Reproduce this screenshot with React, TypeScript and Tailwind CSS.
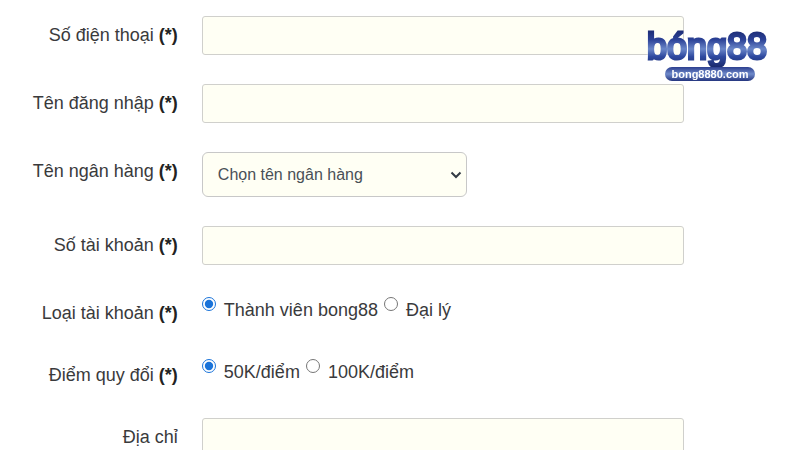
import React from 'react'

const rowClass = 'grid grid-cols-[26%_1fr] gap-x-6'
const labelClass = 'text-right text-lg leading-[39px] text-[#3a3a3c]'
const inputClass = 'block w-full h-[39px] rounded-[3px] border border-[#d0d0cc] bg-[#fffff4] px-4 text-base text-[#495057]'

const Required = () => <b className="text-[#222]">(*)</b>

const TextRow = ({ id, label, required = true }: { id: string; label: string; required?: boolean }) => (
    <div className={rowClass}>
        <label htmlFor={id} className={labelClass}>
            {label} {required && <Required />}
        </label>
        <input id={id} type="text" className={inputClass} />
    </div>
)

const RadioRow = ({ name, label, options }: { name: string; label: string; options: string[] }) => (
    <div role="radiogroup" aria-labelledby={name} className={`${rowClass} h-[33px]`}>
        <div id={name} className={labelClass}>
            {label} <Required />
        </div>
        <div className="flex items-start gap-[6px] text-lg leading-8 text-[#3a3a3c]">
            {options.map((option, i) => (
                <label key={option} className="flex gap-2">
                    <input type="radio" name={name} defaultChecked={i === 0} className="mt-[3px] h-[14px] w-[14px] accent-[#1a73d9]" />
                    {option}
                </label>
            ))}
        </div>
    </div>
)

const Logo = () => (
    <svg className="absolute right-7 top-5 h-16 w-[130px] drop-shadow-[0_0_1px_#fff]" viewBox="0 0 130 64">
        <defs>
            <linearGradient id="blue" x1="0" y1="10" x2="0" y2="48" gradientUnits="userSpaceOnUse">
                <stop offset="0" stopColor="#1c2b73" />
                <stop offset="0.25" stopColor="#2b4196" />
                <stop offset="0.5" stopColor="#6a86c8" />
                <stop offset="0.7" stopColor="#2f4aa0" />
                <stop offset="1" stopColor="#182768" />
            </linearGradient>
            <linearGradient id="pill" x1="0" y1="0" x2="0" y2="1">
                <stop offset="0" stopColor="#2c3f8f" />
                <stop offset="0.5" stopColor="#6f8aca" />
                <stop offset="1" stopColor="#24357f" />
            </linearGradient>
        </defs>
        <text x="65" y="39" textAnchor="middle" fontSize="36" fill="url(#blue)" stroke="url(#blue)" strokeWidth="3" className="font-['Liberation_Sans',Arial,sans-serif]">bóng88</text>
        <rect x="23" y="47" width="90" height="14" rx="7" fill="url(#pill)" />
        <text x="68" y="58" textAnchor="middle" fontSize="11" fontWeight="700" fill="#fff" className="font-['Liberation_Sans',Arial,sans-serif]">bong8880.com</text>
    </svg>
)

const App = () => {
    return (
        <div className="relative h-screen overflow-hidden bg-white font-['Liberation_Sans',Arial,sans-serif]">
            <form className="flex flex-col gap-[29px] pt-4 pr-[14.5%]">
                <TextRow id="phone" label="Số điện thoại" />
                <TextRow id="username" label="Tên đăng nhập" />
                <div className={rowClass}>
                    <label htmlFor="bank" className={labelClass}>
                        Tên ngân hàng <Required />
                    </label>
                    <div className="relative w-[55%]">
                        <select id="bank" className="block h-[45px] w-full appearance-none rounded-md border border-[#c8c8c8] bg-[#fffff4] px-[15px] text-base text-[#495057]">
                            <option>Chọn tên ngân hàng</option>
                        </select>
                        <svg className="pointer-events-none absolute right-[5px] top-[19px] h-2 w-3" viewBox="0 0 12 8" fill="none" stroke="#333b44" strokeWidth="2">
                            <path d="M1.5 1.5 6 6 10.5 1.5" />
                        </svg>
                    </div>
                </div>
                <TextRow id="account" label="Số tài khoản" />
                <RadioRow name="accountType" label="Loại tài khoản" options={['Thành viên bong88', 'Đại lý']} />
                <RadioRow name="rate" label="Điểm quy đổi" options={['50K/điểm', '100K/điểm']} />
                <TextRow id="address" label="Địa chỉ" required={false} />
            </form>
            <Logo />
        </div>
    )
}

export default App
